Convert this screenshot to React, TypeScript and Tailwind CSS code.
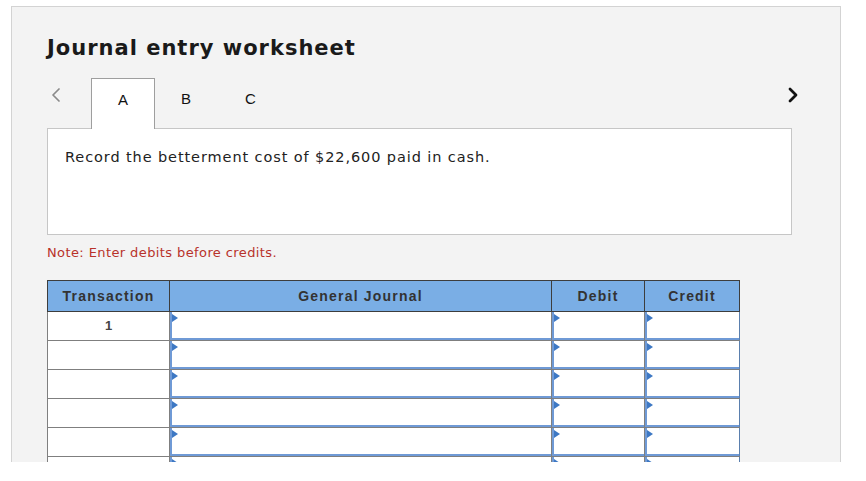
import { ChevronLeft, ChevronRight } from "lucide-react";

const rows = [1, 2, 3, 4, 5, 6];

function EntryCell({ last = false }: { last?: boolean }) {
  return (
    <td className={`h-[29px] p-0 border border-[#7f7f7f] ${last ? "border-r-[#5a7fae]" : ""}`}>
      <div className="relative h-full border-l-2 border-b-2 border-[#6f9ad6] bg-white">
        <span className="absolute left-0 top-[2px] h-0 w-0 border-y-[4px] border-l-[6px] border-y-transparent border-l-[#3d78c4]" />
      </div>
    </td>
  );
}

export default function App() {
  return (
    <div className="h-[481px] w-[866px] overflow-hidden bg-white">
      <div className="ml-[11px] mt-[6px] h-[456px] w-[830px] overflow-hidden border-x border-t border-[#d3d3d3] bg-[#f3f3f3] pl-[35px] pt-[26px]">
        <h1 className="font-['DejaVu_Sans',sans-serif] text-[21px] font-bold leading-[30px] tracking-[1px] text-[#1a1a1a]">
          Journal entry worksheet
        </h1>

        <div className="mt-[15px] flex items-start w-[745px]">
          <ChevronLeft className="mt-[5px] ml-[-3px] h-[24px] w-[24px] text-[#8a8a8a]" strokeWidth={1.75} />
          <div className="relative z-10 ml-[23px] -mb-px h-[51px] w-[64px] border border-b-0 border-[#9e9e9e] bg-white pt-[10px] text-center font-['Liberation_Sans',sans-serif] text-[15px] text-[#111]">
            A
          </div>
          <div className="ml-[26px] pt-[10px] font-['Liberation_Sans',sans-serif] text-[15px] text-[#111]">B</div>
          <div className="ml-[54px] pt-[10px] font-['Liberation_Sans',sans-serif] text-[15px] text-[#111]">C</div>
          <ChevronRight className="ml-auto mt-[5px] mr-[-13px] h-[24px] w-[24px] text-[#111]" strokeWidth={2.75} />
        </div>

        <div className="h-[107px] w-[745px] border border-[#c6c6c6] bg-white px-[17px] pt-[18px] font-['DejaVu_Sans',sans-serif] text-[14.5px] tracking-[0.9px] text-[#222]">
          Record the betterment cost of $22,600 paid in cash.
        </div>

        <p className="mt-[10px] font-['DejaVu_Sans',sans-serif] text-[13px] leading-[16px] tracking-[0.4px] text-[#b8322a]">
          Note: Enter debits before credits.
        </p>

        <table className="mt-[19px] w-[692px] table-fixed border-collapse font-['Liberation_Sans',sans-serif]">
          <colgroup>
            <col className="w-[122px]" />
            <col className="w-[382px]" />
            <col className="w-[93px]" />
            <col className="w-[95px]" />
          </colgroup>
          <thead>
            <tr className="h-[31px] bg-[#7aaee5] text-[14px] font-bold tracking-[1.2px] text-[#333]">
              <th className="border border-[#3d3d3d]">Transaction</th>
              <th className="border border-[#3d3d3d]">General Journal</th>
              <th className="border border-[#3d3d3d]">Debit</th>
              <th className="border border-[#3d3d3d]">Credit</th>
            </tr>
          </thead>
          <tbody>
            {rows.map((n) => (
              <tr key={n}>
                <td className="h-[29px] border border-[#7f7f7f] bg-white text-center align-middle text-[13px] font-bold text-[#444]">
                  {n === 1 ? "1" : ""}
                </td>
                <EntryCell />
                <EntryCell />
                <EntryCell last />
              </tr>
            ))}
          </tbody>
        </table>
      </div>
    </div>
  );
}
